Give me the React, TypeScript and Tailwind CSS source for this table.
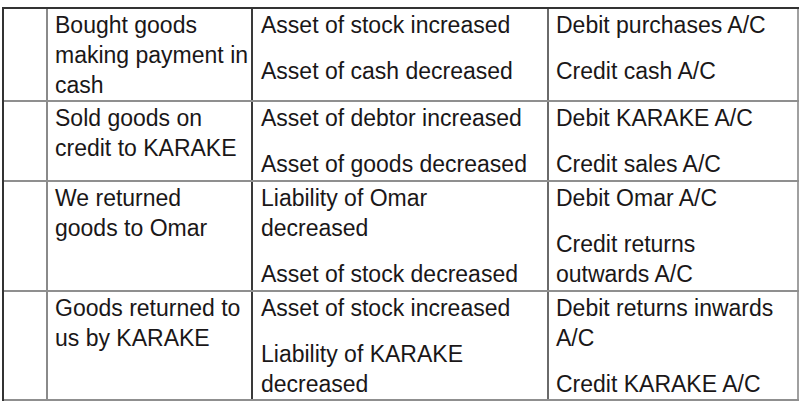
const rows: { item: string[]; effect: string[][]; entry: string[][]; h: string }[] = [
    {
        item: ['Bought goods', 'making payment in', 'cash'],
        effect: [['Asset of stock increased'], ['Asset of cash decreased']],
        entry: [['Debit purchases A/C'], ['Credit cash A/C']],
        h: 'h-[93px]',
    },
    {
        item: ['Sold goods on', 'credit to KARAKE'],
        effect: [['Asset of debtor increased'], ['Asset of goods decreased']],
        entry: [['Debit KARAKE A/C'], ['Credit sales A/C']],
        h: 'h-[80px]',
    },
    {
        item: ['We returned', 'goods to Omar'],
        effect: [['Liability of Omar', 'decreased'], ['Asset of stock decreased']],
        entry: [['Debit Omar A/C'], ['Credit returns', 'outwards A/C']],
        h: 'h-[110px]',
    },
    {
        item: ['Goods returned to', 'us by KARAKE'],
        effect: [['Asset of stock increased'], ['Liability of KARAKE', 'decreased']],
        entry: [['Debit returns inwards', 'A/C'], ['Credit KARAKE A/C']],
        h: 'h-[109px]',
    },
];

function Lines({ lines }: { lines: string[] }) {
    return (
        <div>
            {lines.map((l) => (
                <div key={l} className="h-[30px] whitespace-nowrap">
                    {l}
                </div>
            ))}
        </div>
    );
}

export default function App() {
    return (
        <div className="h-[402px] w-[802px] bg-white pt-[7px] pl-[2px] text-[#1a1718]" style={{ fontFamily: '"Liberation Sans", Arial, sans-serif' }}>
            <div className="w-[797px] border-t-2 border-l-2 border-t-[#333] border-l-[#333] text-[23px] leading-[30px]">
                {rows.map((r, i) => (
                    <div key={i} className={`${r.h} grid grid-cols-[44px_205px_296px_250px] border-b-2 border-[#8f8f8f]`}>
                        <div className="border-r-2 border-[#8a8a8a]" />
                        <div className="border-r-2 border-[#3a3a3a] pt-[1px] pl-[7px]">
                            <Lines lines={r.item} />
                        </div>
                        <div className="flex flex-col gap-[16px] border-r-2 border-[#6a6a6a] pt-[1px] pl-[8px]">
                            {r.effect.map((p, j) => (
                                <Lines key={j} lines={p} />
                            ))}
                        </div>
                        <div className="flex flex-col gap-[16px] border-r-2 border-[#a0a0a0] pt-[1px] pl-[7px]">
                            {r.entry.map((p, j) => (
                                <Lines key={j} lines={p} />
                            ))}
                        </div>
                    </div>
                ))}
            </div>
        </div>
    );
}
